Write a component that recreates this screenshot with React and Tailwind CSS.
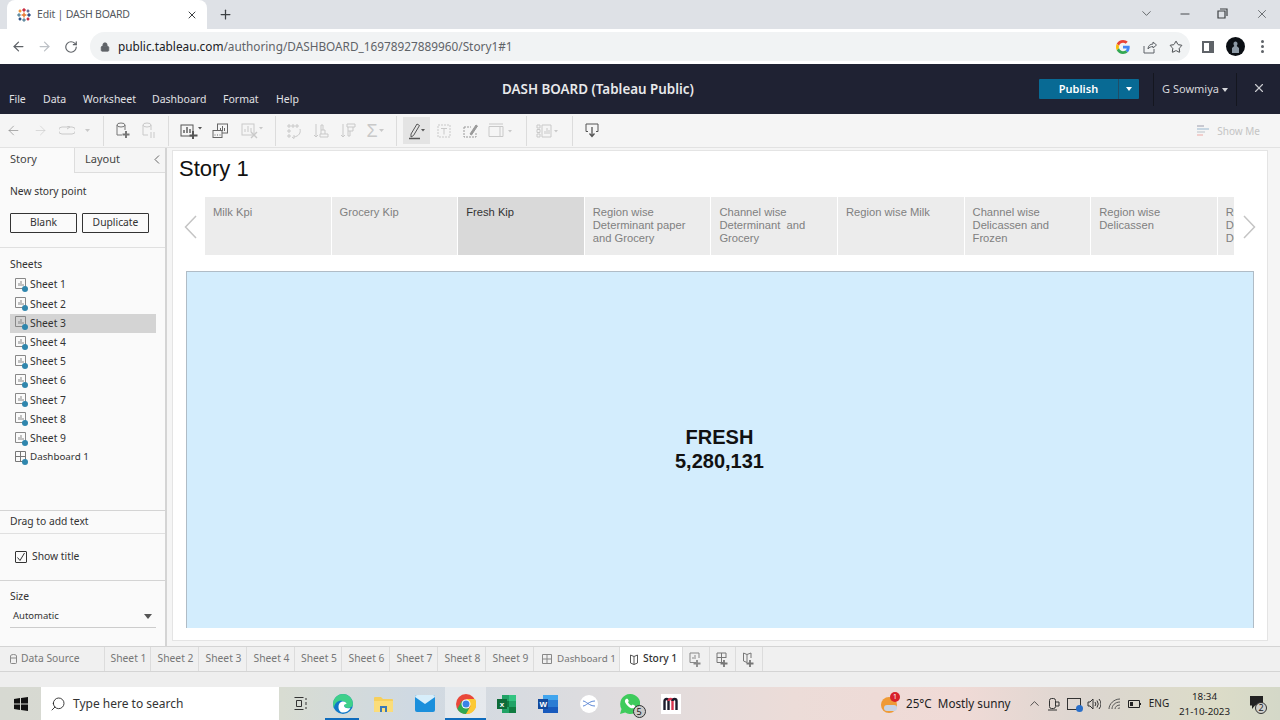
import React from "react";
import { ArrowLeft, ArrowRight, RotateCw, Lock, Star, ChevronDown, Minus, X, Plus, Search, ChevronUp } from "lucide-react";

const noto = "font-['Noto_Sans',sans-serif]";
const arial = "font-['Liberation_Sans',Arial,sans-serif]";

function Svg({ w = 20, h = 20, vb, children, className = "" }) {
  return (
    <svg width={w} height={h} viewBox={vb || `0 0 ${w} ${h}`} fill="none" stroke="currentColor" strokeWidth="1" className={className}>
      {children}
    </svg>
  );
}

function TableauLogo() {
  const c = (x, y, s, col) => (
    <g stroke={col} strokeWidth="1.4" key={x + "-" + y}>
      <path d={`M${x - s} ${y}H${x + s}M${x} ${y - s}V${y + s}`} />
    </g>
  );
  return (
    <svg width="14" height="14" viewBox="0 0 14 14" fill="none">
      {c(7, 7, 2.4, "#e8762d")}
      {c(7, 2, 1.7, "#c72035")}
      {c(7, 12, 1.7, "#5b879b")}
      {c(2, 7, 1.7, "#59879b")}
      {c(12, 7, 1.7, "#1f447e")}
      {c(3, 3, 1.4, "#f28e2b")}
      {c(11, 3, 1.4, "#5b6591")}
      {c(3, 11, 1.4, "#1f447e")}
      {c(11, 11, 1.4, "#c72035")}
    </svg>
  );
}

function GoogleG() {
  return (
    <svg width="14" height="14" viewBox="0 0 48 48">
      <path fill="#EA4335" d="M24 9.5c3.5 0 6.7 1.2 9.2 3.6l6.9-6.9C35.9 2.4 30.5 0 24 0 14.6 0 6.5 5.4 2.6 13.2l8 6.2C12.5 13.7 17.8 9.5 24 9.5z" />
      <path fill="#4285F4" d="M47 24.5c0-1.6-.1-3.1-.4-4.5H24v9h12.9c-.6 3-2.2 5.5-4.8 7.2l7.7 6c4.5-4.2 7.2-10.3 7.2-17.7z" />
      <path fill="#FBBC05" d="M10.5 28.6c-.5-1.5-.8-3-.8-4.6s.3-3.1.8-4.6l-8-6.2C1 16.5 0 20.100 0 24s.9 7.500 2.600 10.800l7.900-6.200z" />
      <path fill="#34A853" d="M24 48c6.500 0 11.900-2.100 15.900-5.800l-7.700-6c-2.200 1.400-4.900 2.300-8.200 2.300-6.200 0-11.500-4.200-13.400-9.900l-8 6.200C6.500 42.600 14.600 48 24 48z" />
    </svg>
  );
}

function ChromeBar() {
  return (
    <div className={`shrink-0 ${arial}`}>
      <div className="h-[29px] bg-[#dee1e6] flex items-end pl-[7px]">
        <div className="w-[200px] h-[29px] bg-white rounded-t-[8px] flex items-center pl-[10px] pr-[9px]">
          <TableauLogo />
          <span className={`ml-[6px] text-[10.500px] tracking-[-0.2px] text-[#55595e] ${noto} flex-1`}>Edit | DASH BOARD</span>
          <X size={12} strokeWidth={2} className="text-[#3c4043]" />
        </div>
        <div className="h-[29px] w-[36px] flex items-center justify-center">
          <Plus size={15} strokeWidth={2} className="text-[#3c4043]" />
        </div>
        <div className="flex-1" />
        <div className="h-[27px] flex items-center text-[#3c4043] self-start">
          <ChevronDown size={15} strokeWidth={1.2} className="mr-[24px]" />
          <Minus size={14} strokeWidth={1.6} className="mr-[25px]" />
          <svg width="11" height="11" viewBox="0 0 11 11" fill="none" stroke="currentColor" strokeWidth="1.2" className="mr-[27px]"><path d="M3 1h7v7M1 3h7v7H1z" /></svg>
          <X size={14} strokeWidth={1.2} className="mr-[11px]" />
        </div>
      </div>
      <div className="h-[35px] bg-white flex items-center">
        <div className="w-[90px] flex items-center text-[#5f6368] pl-[11px]">
          <ArrowLeft size={15} strokeWidth={2} />
          <ArrowRight size={15} strokeWidth={2} className="ml-[11px] text-[#bdc1c6]" />
          <RotateCw size={14} strokeWidth={2} className="ml-[12px]" />
        </div>
        <div className="w-[1100px] h-[29px] rounded-full bg-[#f1f3f4] flex items-center pl-[10px] pr-[7px] ml-[0px]">
          <Lock size={10} fill="#5f6368" className="text-[#5f6368]" />
          <span className={`ml-[8px] text-[11.800px] ${noto} text-[#202124]`}>public.tableau.com<span className="text-[#5f6368]">/authoring/DASHBOARD_16978927889960/Story1#1</span></span>
          <div className="flex-1" />
          <GoogleG />
          <svg width="14" height="14" viewBox="0 0 14 14" fill="none" stroke="#5f6368" strokeWidth="1" className="ml-[13px]"><path d="M1 6v7h10V9M5 9c0-3 2-5 5-5V2l3.500 3L10 8V6.500C8 6.500 6 7.500 5 9z" /></svg>
          <Star size={14} strokeWidth={1.6} className="ml-[12px] text-[#3c4043]" />
        </div>
        <div className="flex-1" />
        <svg width="12" height="12" viewBox="0 0 12 12" className="mr-[12px]"><path d="M0 0h12v12H0z" fill="#5f6368" /><path d="M2 2h5v8H2z" fill="#fff" /></svg>
        <div className="w-[19px] h-[19px] rounded-full bg-[#0b0f14] flex items-center justify-center mr-[16px]">
          <svg width="11" height="13" viewBox="0 0 11 13"><path d="M5.500 1.500c1.200 0 2 1 2 2.200 0 1-.5 1.700-.8 2.200l2.300 2.200V13H2V8.100l2.300-2.200c-.3-.5-.8-1.200-.8-2.200 0-1.200.8-2.200 2-2.200z" fill="#8c99a5" /></svg>
        </div>
        <div className="flex flex-col gap-[2px] mr-[16px]">
          <span className="w-[3px] h-[3px] rounded-full bg-[#5f6368]" />
          <span className="w-[3px] h-[3px] rounded-full bg-[#5f6368]" />
          <span className="w-[3px] h-[3px] rounded-full bg-[#5f6368]" />
        </div>
      </div>
    </div>
  );
}

function Header() {
  return (
    <div className={`h-[50px] shrink-0 bg-[#1f2233] flex relative ${noto}`}>
      <div className="flex items-end pb-[7px] pl-[9px] text-[10.500px] leading-[15px] text-[#e0e1e4]">
        <span className="w-[34px]">File</span>
        <span className="w-[40px]">Data</span>
        <span className="w-[69px]">Worksheet</span>
        <span className="w-[71px]">Dashboard</span>
        <span className="w-[53px]">Format</span>
        <span>Help</span>
      </div>
      <div className={`absolute left-[502px] top-[16px] text-[13.400px] leading-[18px] font-semibold text-[#e8e9eb]`}>DASH BOARD (Tableau Public)</div>
      <div className="flex-1" />
      <div className="flex items-start pt-[15px]">
        <div className="w-[100px] h-[20px] bg-[#086a94] rounded-[1px] flex text-white text-[11px] font-semibold leading-[20px]">
          <span className="w-[80px] text-center border-r border-[#1f4e68]">Publish</span>
          <span className="flex-1 flex items-center justify-center"><span className="w-0 h-0 border-l-[3.500px] border-r-[3.500px] border-t-[4px] border-l-transparent border-r-transparent border-t-white" /></span>
        </div>
        <div className="ml-[14px] -mt-[6px] h-[33px] w-[84px] border-x border-[#14161f] flex items-center justify-center gap-[3px] text-[11px] text-[#d6d7db]">
          <span>G Sowmiya</span>
          <span className="w-0 h-0 border-l-[3.500px] border-r-[3.500px] border-t-[4px] border-l-transparent border-r-transparent border-t-[#d6d7db]" />
        </div>
        <div className="w-[43px] flex justify-center"><X size={14} strokeWidth={2} className="text-[#c8c9ce] mt-[2px]" /></div>
      </div>
    </div>
  );
}

const Div = ({ ml = 0 }) => <div className="w-px h-[30px] bg-[#dcdcdc] shrink-0" style={{ marginLeft: ml }} />;

function Btn({ w, ml = 0, children, active }) {
  return (
    <div className={`h-[27px] flex items-center justify-center shrink-0 ${active ? "bg-[#e4e4e4]" : ""}`} style={{ width: w, marginLeft: ml }}>
      {children}
    </div>
  );
}

const Caret = () => <svg width="5" height="3" viewBox="0 0 5 3" className="ml-[1px] self-center"><path d="M0 0h5L2.500 3z" fill="currentColor" /></svg>;

function Toolbar() {
  const dim = "text-[#c9c9c9]";
  return (
    <div className={`h-[34px] shrink-0 bg-[#f5f5f5] flex items-center border-b border-[#e2e2e2] relative`}>
      <Btn w={27}><ArrowLeft size={15} strokeWidth={1} className="text-[#808080]" /></Btn>
      <Btn w={27}><ArrowRight size={15} strokeWidth={1} className={dim} /></Btn>
      <Btn w={26}><Svg w={16} h={10} className={dim}><path d="M3 1h10a2.500 2.500 0 0 1 0 7H3A2.500 2.500 0 0 1 3 1zM8 0l3 1-3 2" /></Svg></Btn>
      <Btn w={14}><span className={dim}><Caret /></span></Btn>
      <Div ml={9} />
      <Btn w={26} ml={5}><Svg w={15} h={17} className="text-[#777]"><ellipse cx="6" cy="3" rx="4" ry="2" /><path d="M2 3v10h5M10 3v5" /><path d="M11 9v7M7.500 12.500h7" strokeWidth="2" /></Svg></Btn>
      <Btn w={26}><Svg w={15} h={17} className={dim}><ellipse cx="6" cy="3" rx="4" ry="2" /><path d="M2 3v10h5M10 3v5M10 10v6M13 10v6" /></Svg></Btn>
      <Div ml={7} />
      <Btn w={30} ml={7}><Svg w={22} h={17} className="text-[#555]"><rect x="1" y="3" width="12" height="11" /><path d="M4 11V8M7 11V5M10 11V7" strokeWidth="1.400" /><path d="M13 9v8M9.500 13.500h8" strokeWidth="2" /><path d="M18 5h4l-2 2.500z" fill="currentColor" stroke="none" /></Svg></Btn>
      <Btn w={28}><Svg w={16} h={16} className="text-[#666]"><rect x="5.500" y="1" width="10" height="9" /><path d="M8.500 8V5M10.500 8V3M12.500 8V5" /><rect x="1" y="7.500" width="9" height="7" fill="#f5f5f5" /><path d="M2.500 12h1M5 12h1M7.500 12h1" /></Svg></Btn>
      <Btn w={28} ml={4}><Svg w={22} h={17} className={dim}><rect x="1" y="2" width="12" height="11" /><path d="M4 10V7M7 10V4M10 10V6" /><path d="M10 10l6 6M16 10l-6 6" strokeWidth="1.400" /><path d="M18 5h4l-2 2.500z" fill="currentColor" stroke="none" /></Svg></Btn>
      <Div ml={9} />
      <Btn w={26} ml={5}><Svg w={16} h={16} className={dim}><path d="M2 2h2v2H2zM6 2h2v2H6zM10 2h2v2h-2zM2 7h2v2H2zM2 12h2v2H2z" /><path d="M14 6c1 4-1 7-6 8M6 14l2 1.500V12" /></Svg></Btn>
      <Btn w={26} ml={1}><Svg w={16} h={16} className={dim}><path d="M3 1v13M1 12l2 2 2-2M7 14h8v-3H7zM8 11V7h4v4M8 7V2h2v5" /></Svg></Btn>
      <Btn w={26} ml={1}><Svg w={16} h={16} className={dim}><path d="M3 14V1M1 12l2 2 2-2M7 1h8v3H7zM8 4v4h5V4M8 8v5h2V8" /></Svg></Btn>
      <Btn w={26} ml={1}><span className={`flex ${dim}`}><span className={`text-[18px] leading-[18px] ${arial}`}>Σ</span><Caret /></span></Btn>
      <Div ml={8} />
      <Btn w={27} ml={6} active><Svg w={18} h={18} className="text-[#555]"><path d="M3 12L9 2l2.500 1.500-6 10L3 15z" /><path d="M1 16.500h11" strokeWidth="1.500" /><path d="M13 7h4l-2 2.500z" fill="currentColor" stroke="none" /></Svg></Btn>
      <Btn w={26} ml={1}><Svg w={14} h={14} className={dim}><rect x="1" y="1" width="12" height="12" strokeDasharray="2 1" /><path d="M4 4.500h6M7 4.500v6" /></Svg></Btn>
      <Btn w={26} ml={1}><Svg w={16} h={16} className="text-[#999]"><path d="M1 4h7M1 4v10h12V9" strokeDasharray="2 1" /><path d="M7 11l6-9 1.500 1-6 9z" fill="currentColor" /></Svg></Btn>
      <Btn w={30} ml={1}><Svg w={24} h={16} className={dim}><path d="M1 1h14M1 3.500h14v10H1zM12 3.500v10" /><path d="M20 7h4l-2 2.500z" fill="currentColor" stroke="none" /></Svg></Btn>
      <Div ml={11} />
      <Btn w={27} ml={6}><Svg w={22} h={14} className={dim}><path d="M1 1h3v3H1zM1 5.500h3v3H1zM1 10h3v3H1zM6 1h9v12H6zM9 10V7M11 10V4M13 10V6" /><path d="M18 6h4l-2 2.500z" fill="currentColor" stroke="none" /></Svg></Btn>
      <Div ml={12} />
      <Btn w={26} ml={6}><Svg w={14} h={15} className="text-[#555]"><path d="M3 8.500H1V1h12v7.500h-2" /><path d="M7 4v9M4.500 10.500L7 13.500l2.500-3" strokeWidth="1.300" /></Svg></Btn>
      <div className="flex-1" />
      <div className={`flex items-center mr-[20px] mt-[1px] text-[10px] text-[#c4c4c4] ${noto}`}>
        <svg width="13" height="14" viewBox="0 0 13 14" className="mr-[7px]"><path d="M0 1h7v2H0z" fill="#c9c9d1" /><path d="M0 4h12v2H0z" fill="#c7d6e2" /><path d="M0 7h8v2H0z" fill="#d8dcdf" /><path d="M0 10h6v2H0z" fill="#f1cfcd" /></svg>
        Show Me
      </div>
    </div>
  );
}

function SheetIcon({ dash }) {
  return (
    <span className="relative w-[14px] h-[14px] shrink-0 mr-[1px]">
      {dash ? (
        <Svg w={12} h={12} className="text-[#777]"><path d="M.5.5h10v10H.5zM5.500.5v10M.5 5.500h10" /></Svg>
      ) : (
        <Svg w={12} h={12} className="text-[#888]"><path d="M.5.5h10v10H.5z" /><path d="M4 8V5M6 8V3M8 8V6" /></Svg>
      )}
      <span className="absolute left-[7px] top-[8px] w-[6px] h-[6px] rounded-full bg-[#2f86ad]" />
    </span>
  );
}

function Sidebar() {
  const sheets = ["Sheet 1", "Sheet 2", "Sheet 3", "Sheet 4", "Sheet 5", "Sheet 6", "Sheet 7", "Sheet 8", "Sheet 9"];
  return (
    <div className={`w-[167px] shrink-0 bg-[#fafafa] border-r-2 border-[#d4d4d4] flex flex-col text-[10.300px] text-[#333] ${noto}`}>
      <div className="h-[25px] flex shrink-0 text-[11px]">
        <div className="w-[75px] pl-[10px] leading-[22px] border-r border-[#ddd] text-[#444]">Story</div>
        <div className="flex-1 pl-[10px] leading-[20px] border-b border-[#ddd] bg-[#f5f5f5] flex items-center justify-between pr-[5px] pb-[2px] text-[#444]">
          Layout
          <svg width="6" height="9" viewBox="0 0 6 9" fill="none" stroke="#666"><path d="M5 .5l-4 4 4 4" /></svg>
        </div>
      </div>
      <div className="pl-[10px] mt-[11px] leading-[14px]">New story point</div>
      <div className="flex pl-[10px] gap-[5px] mt-[15px]">
        <div className="w-[67px] h-[20px] border border-[#333] rounded-[1px] flex items-center justify-center">Blank</div>
        <div className="w-[67px] h-[20px] border border-[#333] rounded-[1px] flex items-center justify-center">Duplicate</div>
      </div>
      <div className="h-px bg-[#e0e0e0] mt-[14px]" />
      <div className="pl-[10px] mt-[9px] leading-[14px]">Sheets</div>
      <div className="mt-[4.500px]">
        {sheets.map((s) => (
          <div key={s} className={`ml-[10px] w-[146px] h-[19.200px] flex items-center pl-[5px] ${s === "Sheet 3" ? "bg-[#d4d4d4]" : ""}`}>
            <SheetIcon />
            <span>{s}</span>
          </div>
        ))}
        <div className="ml-[10px] w-[146px] h-[19.200px] flex items-center pl-[5px]">
          <SheetIcon dash />
          <span className="text-[9.800px]">Dashboard 1</span>
        </div>
      </div>
      <div className="flex-1" />
      <div className="h-px bg-[#d4d4d4]" />
      <div className="h-[22px] pl-[10px] leading-[21px]">Drag to add text</div>
      <div className="h-px bg-[#e0e0e0]" />
      <div className="h-[46px] flex items-center pl-[15px] pb-[1px]">
        <span className="w-[12px] h-[12px] border border-[#333] flex items-center justify-center mr-[5px] rounded-[1px]">
          <svg width="10" height="10" viewBox="0 0 10 10" fill="none" stroke="#333" strokeWidth="1"><path d="M1.500 5.500L4 8.500 8.500 1" /></svg>
        </span>
        Show title
      </div>
      <div className="h-px bg-[#d4d4d4]" />
      <div className="pl-[10px] mt-[8px] leading-[14px]">Size</div>
      <div className="ml-[10px] w-[146px] h-[23px] mt-[2px] pl-[3px] pr-[4px] flex items-center justify-between border-b border-[#ccc] text-[9.500px]">
        Automatic
        <svg width="8" height="5" viewBox="0 0 8 5"><path d="M0 0h8L4 5z" fill="#555" /></svg>
      </div>
      <div className="h-[18px]" />
    </div>
  );
}

function StoryPanel() {
  const pts = [
    "Milk Kpi",
    "Grocery Kip",
    "Fresh Kip",
    "Region wise Determinant paper and Grocery",
    "Channel wise Determinant  and Grocery",
    "Region wise Milk",
    "Channel wise Delicassen and Frozen",
    "Region wise Delicassen",
    "Region wise Delicassen Determinant",
  ];
  return (
    <div className={`flex-1 bg-white mt-[2px] mb-[5px] ml-[5px] mr-[12px] flex flex-col border border-[#e4e4e4] ${arial}`}>
      <div className="h-[46px] pl-[6px] pt-[2px] text-[22px] leading-[32px] text-[#111] shrink-0">Story 1</div>
      <div className="flex items-center shrink-0 h-[58px]">
        <div className="w-[32px] flex justify-center pl-[2px] pt-[2px]">
          <svg width="13" height="24" viewBox="0 0 13 24" fill="none" stroke="#c4c4c4" strokeWidth="1.500"><path d="M12 1L1.500 12 12 23" /></svg>
        </div>
        <div className="w-[1029px] h-[58px] flex gap-px overflow-hidden">
          {pts.map((p, i) => (
            <div key={i} className={`w-[125.600px] h-[58px] shrink-0 pl-[8px] pr-[14px] pt-[8.500px] text-[11.200px] leading-[13.300px] whitespace-pre-wrap ${i === 2 ? "bg-[#d9d9d9] text-[#333]" : "bg-[#ececec] text-[#808080]"}`}>
              {p}
            </div>
          ))}
        </div>
        <div className="w-[30px] flex justify-center pt-[2px]">
          <svg width="13" height="24" viewBox="0 0 13 24" fill="none" stroke="#c4c4c4" strokeWidth="1.500"><path d="M1 1l10.500 11L1 23" /></svg>
        </div>
      </div>
      <div className="mx-[13px] mt-[16px] h-[357px] bg-[#d3edfd] border-l border-t border-r border-[#b0bcc6] flex items-center justify-center">
        <div className="text-center text-[20px] leading-[24px] font-bold text-[#111] -ml-[1px] pb-[2px]">
          <div>FRESH</div>
          <div>5,280,131</div>
        </div>
      </div>
      <div className="flex-1" />
    </div>
  );
}

function BottomTabs() {
  const sheets = [["Sheet 1", 46], ["Sheet 2", 48], ["Sheet 3", 48], ["Sheet 4", 48], ["Sheet 5", 47], ["Sheet 6", 48], ["Sheet 7", 48], ["Sheet 8", 48], ["Sheet 9", 48]];
  const plus = (
    <path d="M8 8v7M4.500 11.500h7" strokeWidth="1.800" />
  );
  return (
    <div className={`h-[26px] shrink-0 bg-[#f0f0f0] border-y border-[#d4d4d4] flex text-[10.300px] text-[#777] ${noto}`}>
      <div className="w-[105px] flex items-center pl-[10px] border-r border-[#dcdcdc]">
        <Svg w={8} h={10} className="text-[#888] mr-[3px]"><path d="M.5 2a3 1.500 0 0 1 6 0v6.500a1 1 0 0 1-1 1h-4a1 1 0 0 1-1-1zM.5 4h6" /></Svg>
        Data Source
      </div>
      {sheets.map(([s, w]) => (
        <div key={s} style={{ width: w }} className="flex items-center justify-center pl-[2px] border-r border-[#dcdcdc]">{s}</div>
      ))}
      <div className="w-[86px] flex items-center pl-[8px] gap-[5px] border-r border-[#dcdcdc] text-[9.800px]">
        <Svg w={10} h={10} className="text-[#888]"><path d="M.5.5h9v9h-9zM5 .5v9M.5 5h9" /></Svg>
        Dashboard 1
      </div>
      <div className="w-[63px] flex items-center pl-[9px] gap-[4px] bg-white border-r border-[#dcdcdc] text-[#333] font-medium">
        <Svg w={10} h={11} className="text-[#555]"><path d="M5 2.500L1.500 1v8L5 10.500 8.500 9V1zM5 2.500v8" /></Svg>
        Story 1
      </div>
      <div className="w-[27px] flex items-center justify-center border-r border-[#dcdcdc]"><Svg w={14} h={15} className="text-[#888]"><path d="M7 10.500H1V1h9v5" /><path d="M4 7V5M6 7V3" />{plus}</Svg></div>
      <div className="w-[26px] flex items-center justify-center border-r border-[#dcdcdc]"><Svg w={14} h={15} className="text-[#777]"><path d="M7 10.500H1V1h9v5M5.500 1v9M1 5.500h9" />{plus}</Svg></div>
      <div className="w-[27px] flex items-center justify-center border-r border-[#dcdcdc]"><Svg w={14} h={15} className="text-[#777]"><path d="M5 2.500L1.500 1v8L5 10.500M5 2.500L9 1v5M5 2.500v8" />{plus}</Svg></div>
    </div>
  );
}

function TaskCell({ children, active, bar }) {
  return (
    <div className={`w-[41px] h-[33px] shrink-0 flex items-center justify-center relative ${active ? "bg-[#ffffff66]" : ""}`}>
      {children}
      {bar === "full" && <span className="absolute bottom-0 left-0 right-0 h-[2px] bg-[#0f6cbd]" />}
      {bar === "part" && <span className="absolute bottom-0 left-[3px] right-[4px] h-[2px] bg-[#0f6cbd]" />}
    </div>
  );
}

function Taskbar() {
  return (
    <div className={`h-[33px] shrink-0 flex items-center text-[#222] bg-[linear-gradient(90deg,#d7d9d2_0%,#d8dcd2_22%,#cfd9e2_32%,#dcdcdf_45%,#ecdcd8_62%,#f0dad6_75%,#dcd6d0_85%,#dcdcc8_95%,#d4d8c8_100%)] ${noto}`}>
      <div className="w-[41px] flex justify-center">
        <svg width="14" height="14" viewBox="0 0 14 14" fill="#111"><path d="M0 2l6-1v5.500H0zM7 .9L14 0v6.500H7zM0 7.500h6V13l-6-1zM7 7.500h7V14l-7-1z" /></svg>
      </div>
      <div className="w-[238px] h-[33px] bg-white flex items-center pl-[9px]">
        <Search size={16} strokeWidth={1.300} className="text-[#222] -scale-x-100" />
        <span className="ml-[7px] text-[12px] text-[#333]">Type here to search</span>
      </div>
      <div className="w-[41px] flex justify-center text-[#333]">
        <svg width="14" height="13" viewBox="0 0 14 13" fill="none" stroke="currentColor"><path d="M.5.5h9M2.500 3.500h5v6h-5zM.5 12.500h9M12 1v2M12 5v3M12 10v2" transform="translate(1 0)" /></svg>
      </div>
      <div className="w-[2px]" />
      <TaskCell bar="part">
        <svg width="20" height="20" viewBox="0 0 20 20"><circle cx="10" cy="10" r="10" fill="#0f78c8" /><path d="M20 10c0 2-2 4-5 4-3 0-4-1.500-4-3 0-1 1-1.500 2-1.500S10 6 6 7C3 8 1 11 1 14 0 12 0 11 0 10 0 4.500 4.500 0 10 0s10 4.500 10 10z" fill="#3fd08a" /><path d="M5.500 13C5.500 9 8 7.500 10 7.500c2 0 3.500 1 3.500 2.500-1 0-2.500.5-2.500 1.500 0 2 2.500 3.500 6.500 2.500-1.500 3-4.500 4.500-7.500 4.500-2.500 0-4.500-2-4.500-5.500z" fill="#fff" /></svg>
      </TaskCell>
      <TaskCell>
        <svg width="19" height="17" viewBox="0 0 19 17"><path d="M0 3a1 1 0 0 1 1-1h6l2 2h9a1 1 0 0 1 1 1v11a1 1 0 0 1-1 1H1a1 1 0 0 1-1-1z" fill="#f6cf5c" /><path d="M0 6h19v10a1 1 0 0 1-1 1H1a1 1 0 0 1-1-1z" fill="#fbdd7a" /><path d="M6 11h7v6h-2v-4H8v4H6z" fill="#3a78b8" /></svg>
      </TaskCell>
      <TaskCell>
        <svg width="20" height="17" viewBox="0 0 20 17"><path d="M0 2a2 2 0 0 1 2-2h16a2 2 0 0 1 2 2v13a2 2 0 0 1-2 2H2a2 2 0 0 1-2-2z" fill="#1a8fdc" /><path d="M0 2a2 2 0 0 1 2-2h16a2 2 0 0 1 2 2L10 9z" fill="#d7eefb" /></svg>
      </TaskCell>
      <TaskCell active bar="full">
        <svg width="20" height="20" viewBox="0 0 20 20"><circle cx="10" cy="10" r="10" fill="#e9483a" /><path d="M10 20a10 10 0 0 1-8.700-5L6 6.500 10 14l4 .5z" fill="#2fa84f" /><path d="M10 5h9a10 10 0 0 1-9 15l4.500-8z" fill="#fcc934" /><circle cx="10" cy="10" r="4.500" fill="#fff" /><circle cx="10" cy="10" r="3.500" fill="#3b82e6" /></svg>
      </TaskCell>
      <TaskCell>
        <svg width="20" height="20" viewBox="0 0 20 20"><path d="M5 1h14v18H5z" fill="#21a366" /><path d="M12 1h7v6h-7z" fill="#33c481" /><path d="M12 13h7v6h-7z" fill="#107c41" /><path d="M5 7h7v6H5z" fill="#107c41" /><path d="M0 5h10v10H0z" fill="#0e6b38" /><text x="2.800" y="13" fontSize="8" fontWeight="700" fill="#fff" stroke="none" fontFamily="Liberation Sans">x</text></svg>
      </TaskCell>
      <TaskCell>
        <svg width="20" height="18" viewBox="0 0 20 18"><path d="M5 0h15v18H5z" fill="#2b7cd3" /><path d="M5 0h15v5H5z" fill="#41a5ee" /><path d="M5 12h15v6H5z" fill="#185abd" /><path d="M0 4h10v10H0z" fill="#124a9c" /><text x="1.500" y="12" fontSize="8" fontWeight="700" fill="#fff" stroke="none" fontFamily="Liberation Sans">W</text></svg>
      </TaskCell>
      <TaskCell>
        <span className="w-[18px] h-[18px] rounded-full bg-white flex items-center justify-center">
          <svg width="12" height="7" viewBox="0 0 12 7" fill="none" stroke="#5b87d6" strokeWidth="1"><path d="M0 1c3 0 6 5 12 5M0 6c3 0 6-5 12-5" /></svg>
        </span>
      </TaskCell>
      <TaskCell>
        <span className="relative">
          <svg width="20" height="20" viewBox="0 0 20 20"><path d="M10 0a10 10 0 0 0-8.500 15L0 20l5.200-1.400A10 10 0 1 0 10 0z" fill="#3ecb5c" /><path d="M6 5c.5-.5 1.500-.5 1.800 0l1 2-.8 1.200c.8 1.500 2 2.600 3.500 3.300l1.200-.9 2 1c.5.300.3 1.300 0 1.800-1 1.200-3 1.200-5 0C7.500 12.200 5.500 9.500 5 8 4.700 6.800 5.300 5.600 6 5z" fill="#fff" /></svg>
          <span className={`absolute left-[13px] top-[11px] w-[13px] h-[13px] rounded-full bg-[#c9c9c9] border border-[#333] text-[9px] leading-[11px] text-center text-[#111]`}>5</span>
        </span>
      </TaskCell>
      <TaskCell>
        <span className="w-[20px] h-[20px] bg-white flex items-center justify-center">
          <svg width="16" height="13" viewBox="0 0 16 13" fill="none" strokeWidth="2.400"><path d="M1.500 13V4a2 2 0 0 1 4 0v9" stroke="#1b1b2b" /><path d="M5.500 4a2 2 0 0 1 4 0v9" stroke="#d9344e" /><path d="M9.500 4a2 2 0 0 1 4 0v9" stroke="#1b1b2b" /></svg>
        </span>
      </TaskCell>
      <div className="flex-1" />
      <div className="relative w-[18px] h-[18px] mr-[7px]">
        <span className="absolute left-0 top-[2px] w-[16px] h-[16px] rounded-full bg-[#ef9a36]" />
        <span className="absolute left-[3px] top-[10px] w-[13px] h-[6px] rounded-full bg-[#c8d4e4]" />
        <span className="absolute left-[9px] -top-[3px] w-[10px] h-[10px] rounded-full bg-[#d8202a] text-white text-[7px] leading-[10px] text-center">1</span>
      </div>
      <span className="text-[11.700px] w-[105px] shrink-0 whitespace-nowrap">25°C&nbsp; Mostly sunny</span>
      <div className="ml-[13px] w-[20px] flex justify-center"><ChevronUp size={15} strokeWidth={1.200} /></div>
      <div className="w-[20px] flex justify-center">
        <svg width="12" height="14" viewBox="0 0 12 14" fill="none" stroke="#333"><rect x="1.500" y="1.500" width="6" height="10" rx="2" /><path d="M8 5h3v4H8M0 13h9" /></svg>
      </div>
      <div className="w-[20px] flex justify-center">
        <span className="relative w-[14px] h-[12px] border border-[#333] block">
          <span className="absolute -right-[3px] -bottom-[3px] w-[7px] h-[7px] rounded-full bg-[#2a6fc9]" />
        </span>
      </div>
      <div className="w-[20px] flex justify-center">
        <svg width="14" height="12" viewBox="0 0 14 12" fill="none" stroke="#333"><path d="M1 4h2l3-3v10L3 8H1zM8 4a3 3 0 0 1 0 4M10 2.500a6 6 0 0 1 0 7M12 1a8 8 0 0 1 0 10" /></svg>
      </div>
      <div className="w-[20px] flex justify-center">
        <svg width="13" height="12" viewBox="0 0 13 12" fill="none" stroke="#555"><path d="M1 11C1 6 6 1 12 1M4 11c0-3.500 3-7 8-7M7 11c0-2 2-4 5-4M10 11c0-.6.600-1 2-1" /></svg>
      </div>
      <div className="w-[20px] flex justify-center">
        <svg width="13" height="8" viewBox="0 0 13 8"><path d="M.5.5h11v7H.5z" fill="none" stroke="#222" /><path d="M2 2h3v4H2zM12 3h1v2h-1z" fill="#222" /></svg>
      </div>
      <span className="w-[30px] text-center text-[10px]">ENG</span>
      <div className="w-[61px] text-center text-[9.800px] leading-[15px]">
        <div>18:34</div>
        <div>21-10-2023</div>
      </div>
      <div className="w-[45px] flex justify-center relative">
        <svg width="13" height="13" viewBox="0 0 13 13" fill="#222" className="-ml-[3px] -mt-[2px]"><path d="M0 0h13v9.500H5L2 13V9.500H0z" /></svg>
        <span className="absolute left-[20px] top-[4px] w-[12px] h-[12px] rounded-full bg-[#d0d0cc] border border-[#333] text-[9px] leading-[10px] text-center">2</span>
      </div>
    </div>
  );
}

export default function App() {
  return (
    <div className="w-[1280px] h-[720px] overflow-hidden flex flex-col bg-[#f5f5f5]">
      <ChromeBar />
      <Header />
      <Toolbar />
      <div className="flex-1 flex min-h-0">
        <Sidebar />
        <StoryPanel />
      </div>
      <BottomTabs />
      <div className="h-[15px] shrink-0 bg-[#eeeeee]" />
      <Taskbar />
    </div>
  );
}
